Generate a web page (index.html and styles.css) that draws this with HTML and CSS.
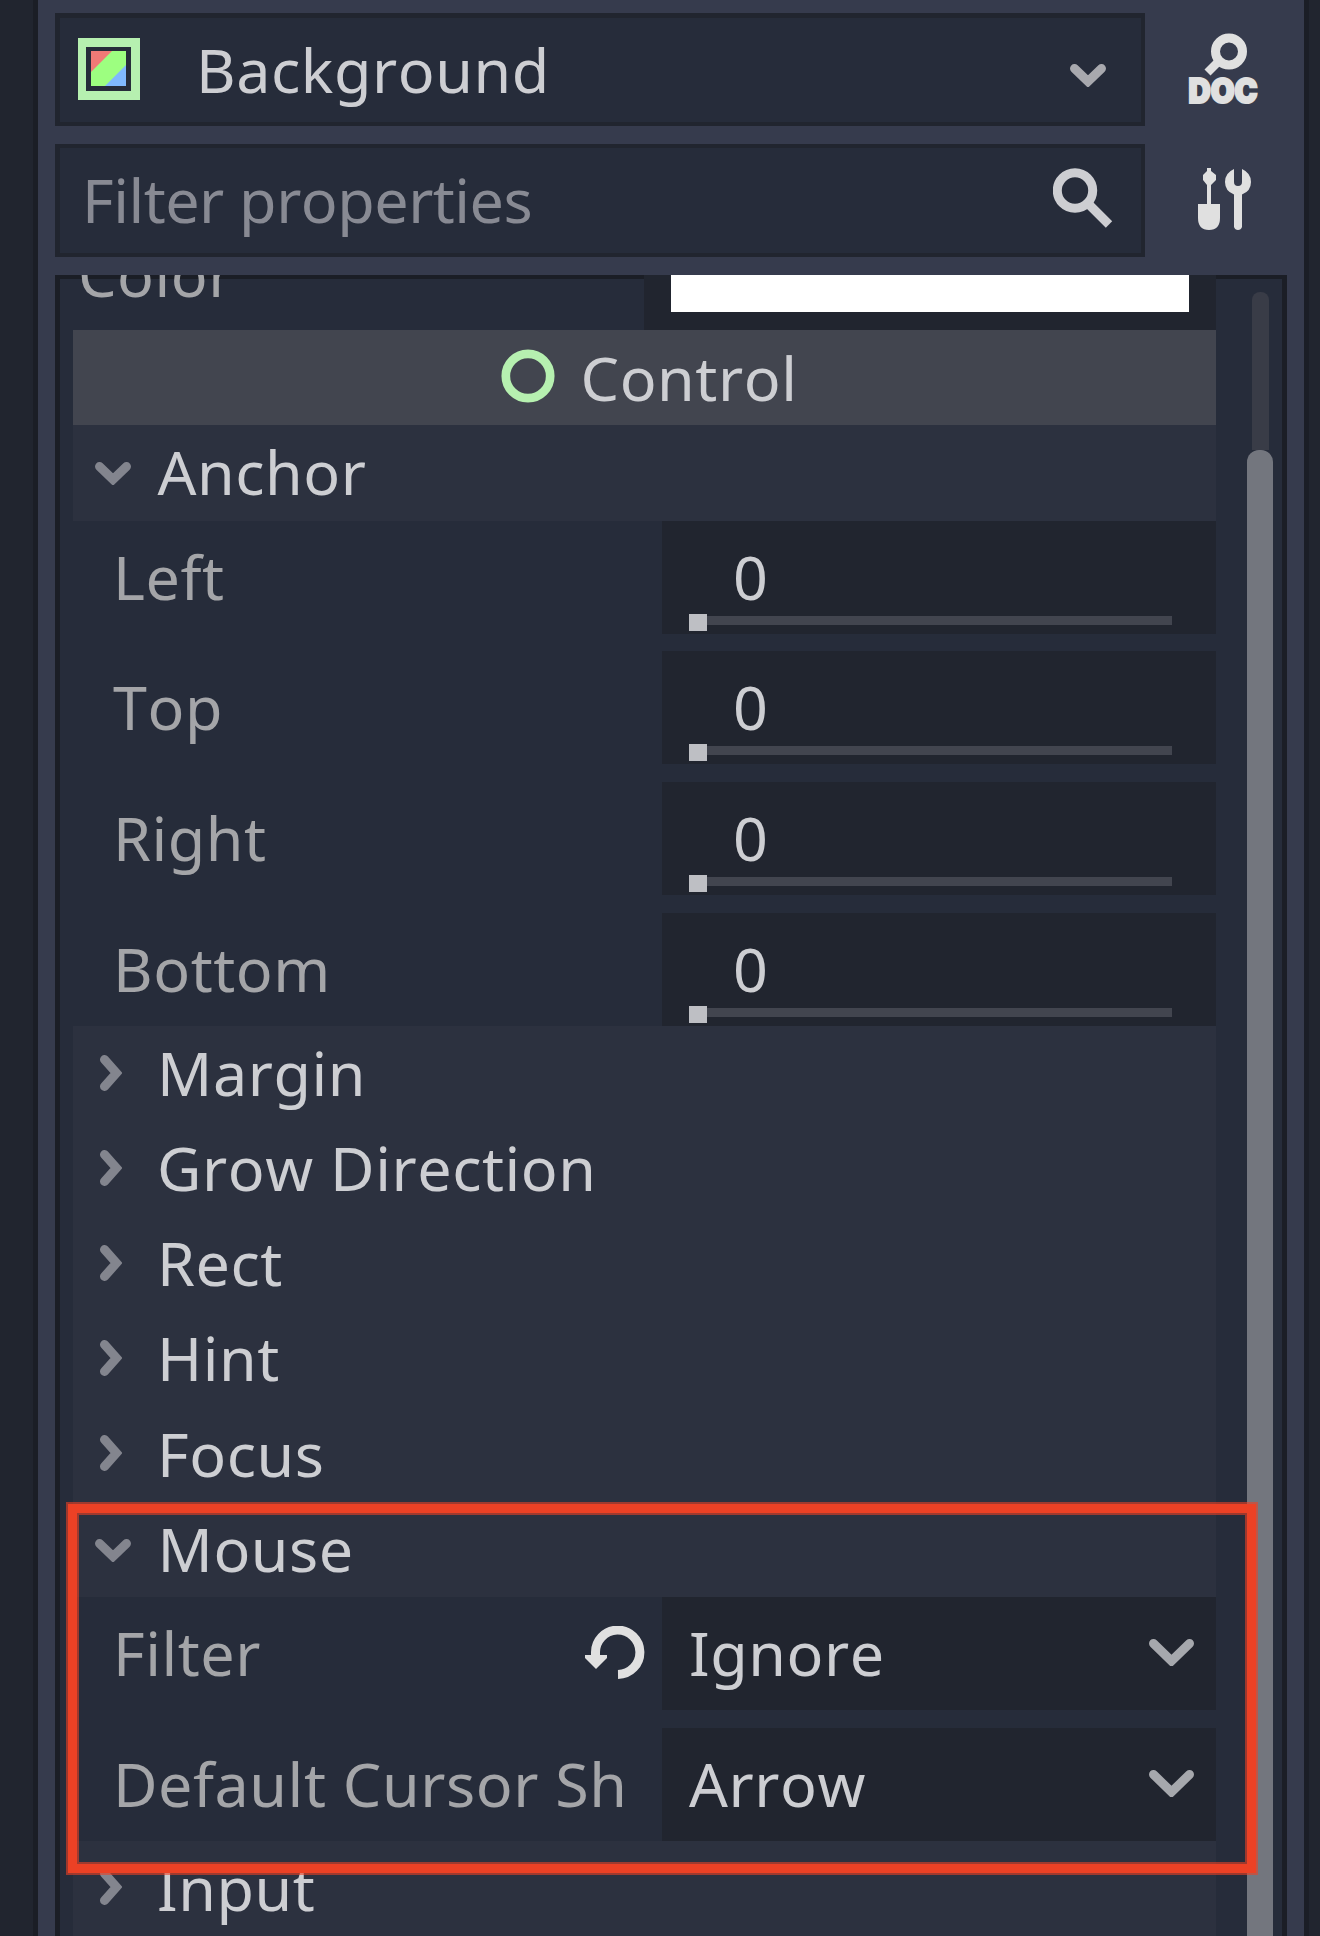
FILE: index.html
```html
<!DOCTYPE html>
<html lang="en">
<head>
<meta charset="utf-8">
<title>Inspector</title>
<link rel="stylesheet" href="styles.css">
</head>
<body>
<svg class="defs" width="0" height="0">
  <symbol id="down" viewBox="0 0 36 23"><path d="M4.5 4.5 18 17.5 31.500 4.500"/></symbol>
  <symbol id="right" viewBox="0 0 22 36"><path d="M4.500 4.500 16.500 18 4.500 31.500"/></symbol>
  <symbol id="down-wide" viewBox="0 0 45 27"><path d="M4.500 4.500 22.500 22 40.500 4.500"/></symbol>
</svg>
<div class="dock">
  <header class="toolbar">
    <div class="field node">
      <svg class="node-icon" width="62" height="62" viewBox="0 0 62 62">
        <path d="M0 0H62V62H0ZM8 9V53H53V9Z" fill="#b6f0b0" fill-rule="evenodd"/>
        <path d="M13 13H48V48H13Z" fill="#9dff80"/>
        <path d="M13 13H34L13 34Z" fill="#f07a76"/>
        <path d="M48 27V48H27Z" fill="#80b9ff"/>
      </svg>
      <span class="grow">Background</span>
      <svg class="chev node-chev" width="36" height="23"><use href="#down"/></svg>
    </div>
    <svg class="tool" width="67" height="74" viewBox="0 0 67 74">
      <circle cx="40" cy="18.500" r="13.500" fill="none" stroke="#e0e0e0" stroke-width="9"/>
      <path d="M29 29 18.500 39.500" stroke="#e0e0e0" stroke-width="8.500"/>
      <text class="doc" x="-.5" y="70" textLength="69" lengthAdjust="spacingAndGlyphs">DOC</text>
    </svg>
    <div class="field search">
      <span class="grow">Filter properties</span>
      <svg class="search-icon" width="60" height="60" viewBox="0 0 60 60" fill="none" stroke="#cdced2">
        <circle cx="22" cy="22.500" r="17.700" stroke-width="9"/>
        <path d="M34 34.500 56 56.500" stroke-width="9"/>
      </svg>
    </div>
    <svg class="tool tools" width="53" height="62" viewBox="0 0 53 62" fill="#e0e0e0">
      <path d="M9 0H13V3L18 7V12L13 17V36H22V50Q22 62 11 62T0 50V36H9V17L5 12V7L9 3Z"/>
      <path d="M36 1V14Q36 18 40 18T44 14V1Q53 5 53 14 53 23 44 26.500V59Q43 62 40 62T36 59V26.500Q27 23 27 14 27 5 36 1Z"/>
    </svg>
  </header>
  <main class="tree">
    <div class="list">
      <div class="color-row"><div class="clip"><span>Color</span></div><div class="swatch"><div></div></div></div>
      <div class="category">
        <svg width="54" height="54" viewBox="0 0 54 54"><circle cx="27" cy="27" r="22.200" fill="none" stroke="#b6f0b0" stroke-width="8.700"/></svg>
        <span>Control</span>
      </div>
      <div class="section open"><svg class="chev" width="36" height="23"><use href="#down"/></svg><span>Anchor</span></div>
      <div class="props anchors">
        <div class="prop"><label>Left</label><div class="num"><span>0</span><div class="slider"><i></i></div></div></div>
        <div class="prop"><label>Top</label><div class="num"><span>0</span><div class="slider"><i></i></div></div></div>
        <div class="prop"><label>Right</label><div class="num"><span>0</span><div class="slider"><i></i></div></div></div>
        <div class="prop"><label>Bottom</label><div class="num"><span>0</span><div class="slider"><i></i></div></div></div>
      </div>
      <div class="section"><svg class="chev" width="22" height="36"><use href="#right"/></svg><span>Margin</span></div>
      <div class="section"><svg class="chev" width="22" height="36"><use href="#right"/></svg><span>Grow Direction</span></div>
      <div class="section"><svg class="chev" width="22" height="36"><use href="#right"/></svg><span>Rect</span></div>
      <div class="section"><svg class="chev" width="22" height="36"><use href="#right"/></svg><span>Hint</span></div>
      <div class="section"><svg class="chev" width="22" height="36"><use href="#right"/></svg><span>Focus</span></div>
      <div class="section open"><svg class="chev" width="36" height="23"><use href="#down"/></svg><span>Mouse</span></div>
      <div class="props">
        <div class="prop"><label>Filter</label>
          <svg class="revert" width="60" height="54" viewBox="0 0 60 54"><path d="M10.500 31V27A22.200 22.200 0 1 1 33 48.500" fill="none" stroke="#e0e0e0" stroke-width="9"/><path d="M0 29H22V32L11 43 0 32Z" fill="#e0e0e0"/></svg>
          <div class="select"><span>Ignore</span><svg class="chev" width="45" height="27"><use href="#down-wide"/></svg></div></div>
        <div class="prop"><label>Default Cursor Sh</label>
          <div class="select"><span>Arrow</span><svg class="chev" width="45" height="27"><use href="#down-wide"/></svg></div></div>
      </div>
      <div class="section"><svg class="chev" width="22" height="36"><use href="#right"/></svg><span>Input</span></div>
    </div>
    <div class="scrollbar"><div class="track"></div><div class="grabber"></div></div>
  </main>
</div>
<div class="highlight"></div>
</body>
</html>
```
FILE: styles.css
```css
* { box-sizing: border-box; }

body {
  margin: 0;
  width: 1320px;
  height: 1936px;
  overflow: hidden;
  position: relative;
  background: #21252f;
  color: #cdced2;
  font-family: "Noto Sans", sans-serif;
  font-size: 61px;
  font-kerning: none;
  letter-spacing: .55px;
  white-space: nowrap;
}

svg { display: block; flex: none; }
.defs { position: absolute; }
.grow { flex: 1; }

.dock {
  margin: 0 11px 0 33px;
  height: 1936px;
  border: solid #1b1e26;
  border-width: 0 5px;
  background: #363b4d;
  padding: 13px 17px 0;
  display: flex;
  flex-direction: column;
}

.toolbar {
  display: grid;
  grid-template-columns: 1090px 1fr;
  grid-template-rows: 113px 113px;
  row-gap: 18px;
  margin-bottom: 18px;
}

.field {
  display: flex;
  background: #262c3a;
  border: solid #21252f;
  border-width: 5px 4px 4px 5px;
  line-height: 103px;
}
.node { padding-left: 18px; }
.node-icon { margin: 20px 56px 0 0; }
.node-chev { margin: 46px 35px 0 0; }
.search {
  padding-left: 22px;
  color: #888a93;
  border-top-width: 4px;
  line-height: 104px;
  letter-spacing: -.5px;
}
.search-icon { margin: 20px 28.500px 0 0; }

.tool { margin: 20px 0 0 44px; overflow: visible; }
.tools { margin: 24px 0 0 53px; }
.doc { font: 900 33.500px Inter, sans-serif; letter-spacing: 0; fill: #e0e0e0; stroke: #e0e0e0; stroke-width: 2.200px; }

.chev { fill: none; stroke: #83858e; stroke-width: 9px; stroke-linecap: round; }
.node-chev { stroke: #a8a9ae; }

.tree {
  flex: 1;
  min-height: 0;
  display: flex;
  background: #262c3a;
  box-shadow: inset 5px 0 #1b1e26, inset -5px 0 #1b1e26, inset 0 4px #1b1e26;
  padding: 0 14px 0 18px;
  overflow: hidden;
}
.list { width: 1143px; flex: none; }

.color-row { display: flex; height: 55px; }
.clip {
  width: 571px;
  height: 55px;
  padding-left: 5px;
  overflow: hidden;
  color: #a4a5a8;
  line-height: 83px;
}
.clip span { display: block; margin-top: -43px; }
.swatch { flex: 1; background: #21252f; padding: 0 27px; }
.swatch div { height: 37px; background: #fff; }

.category {
  display: flex;
  justify-content: center;
  gap: 26px;
  height: 95px;
  padding-left: 9px;
  line-height: 95px;
  background: #42454f;
}
.category svg { margin-top: 19px; }

.section {
  display: flex;
  height: 95.17px;
  padding-left: 27px;
  line-height: 94px;
  background: #2c313f;
}
.section svg { margin: 28.500px 35px 0 0; }
.section.open { padding-left: 22px; }
.section.open svg { margin: 37px 26.500px 0 0; }
.category + .section { height: 96px; }

.props { display: flex; flex-direction: column; gap: 18px; }
.anchors .prop:first-child { margin-bottom: -1px; }
.prop { display: flex; height: 113px; line-height: 112px; }
.prop label {
  width: 589px;
  padding-left: 40px;
  color: #a4a5a8;
}
.num, .select { flex: 1; background: #21252f; }
.num { padding-left: 27px; display: flex; flex-direction: column; }
.num span { height: 93px; padding-left: 44px; }
.slider { width: 483px; height: 17px; padding-top: 2px; background: linear-gradient(#42454f, #42454f) 0 2px / 100% 9px no-repeat; }
.slider i { display: block; width: 18px; height: 17px; margin-top: -2px; background: #bebfc4; }
.select { display: flex; justify-content: space-between; padding: 0 22px 0 27px; }
.select svg { margin-top: 42px; stroke: #a6a8ad; }
.revert { margin: 29px 17px 0 -77px; }

.scrollbar { width: 26px; margin-left: 31px; padding-top: 17px; display: flex; flex-direction: column; align-items: center; }
.track { width: 17px; height: 158px; border-radius: 8px 8px 0 0; background: #393c47; }
.grabber { width: 26px; flex: 1; border-radius: 12px 12px 0 0; background: #73767e; }

.highlight {
  position: absolute;
  left: 68px;
  top: 1504px;
  width: 1188px;
  height: 369px;
  border: 9px solid #ec4125;
  box-shadow: 0 0 0 2px rgba(236, 65, 37, .6), inset 0 0 0 2px rgba(236, 65, 37, .6);
}
```
